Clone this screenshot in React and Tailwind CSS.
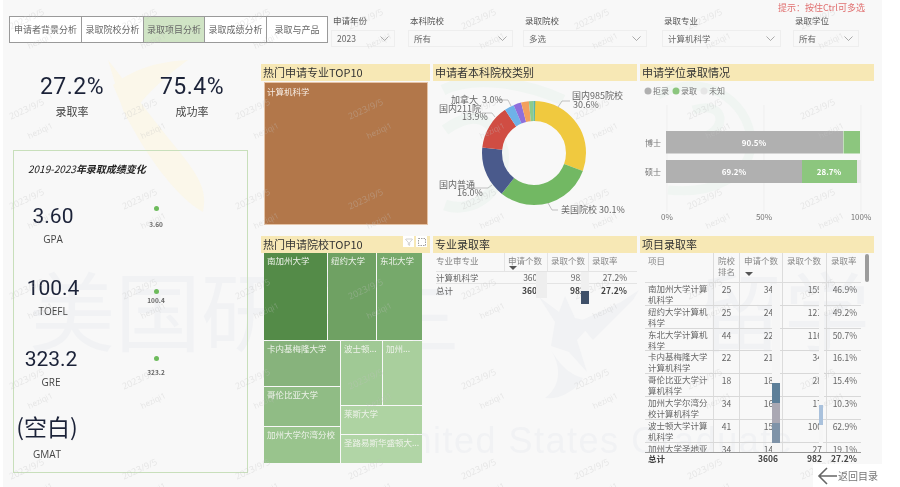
import { Filter } from "lucide-react";

const cjk = "font-['Noto_Sans_CJK_SC','Liberation_Sans',sans-serif]";

const tabs = [
  { label: "申请者背景分析", width: "w-[73px]" },
  { label: "录取院校分析", width: "w-[63px]" },
  { label: "录取项目分析", width: "w-[62px]", active: true },
  { label: "录取成绩分析", width: "w-[63px]" },
  { label: "录取与产品", width: "w-[62px]" },
];

const slicers = [
  { label: "申请年份", value: "2023", width: "w-[64px]", gap: "ml-[4px]" },
  { label: "本科院校", value: "所有", width: "w-[105px]", gap: "ml-[13px]" },
  { label: "录取院校", value: "多选", width: "w-[124px]", gap: "ml-[10px]" },
  { label: "录取专业", value: "计算机科学", width: "w-[119px]", gap: "ml-[15px]" },
  { label: "录取学位", value: "所有", width: "w-[66px]", gap: "ml-[12px]" },
];

const scores = [
  { value: "3.60", name: "GPA", box: "w-[76px]", dot: "pt-[7px]", gap: "mt-[10px]" },
  { value: "100.4", name: "TOEFL", box: "w-[76px]", dot: "pt-[18px]", gap: "mt-[3px]" },
  { value: "323.2", name: "GRE", box: "w-[72px]", dot: "pt-[14px]", gap: "mt-[8px]" },
];

const donut = [
  { size: 30.6, color: "#f0c93f" },
  { size: 30.1, color: "#72b863" },
  { size: 16, color: "#4a5a8c" },
  { size: 13.9, color: "#d04d43" },
  { size: 3, color: "#6eb2e8" },
  { size: 2.4, color: "#8e6fdc" },
  { size: 2.4, color: "#f2a05e" },
  { size: 1.4, color: "#8ccb8c" },
  { size: 0.6, color: "#5ab5a8" },
];

const projects = [
  ["南加州大学计算机科学", "25", "340", "159", "46.9%"],
  ["纽约大学计算机科学", "25", "246", "121", "49.2%"],
  ["东北大学计算机科学", "44", "229", "116", "50.7%"],
  ["卡内基梅隆大学计算机科学", "22", "211", "34", "16.1%"],
  ["哥伦比亚大学计算机科学", "18", "182", "28", "15.4%"],
  ["加州大学尔湾分校计算机科学", "34", "165", "17", "10.3%"],
  ["波士顿大学计算机科学", "41", "159", "100", "62.9%"],
  ["加州大学圣地亚哥计算机科学", "34", "141", "27", "19.1%"],
];

const marks = [];
for (let y = 0; y < 6; y++) {
  for (let x = 0; x < 8; x++) {
    marks.push({ x: 4 + x * 113, y: 12 + y * 90 });
  }
}

function Title({ children, right }) {
  return (
    <div className="h-[17px] shrink-0 bg-[#f7e8b5] pl-[2px] flex items-center justify-between text-[11px] leading-none text-[#333]">
      <span>{children}</span>
      {right}
    </div>
  );
}

function Cell({ label, className }) {
  return (
    <div className={`px-[3px] pt-[2px] text-[8.5px] leading-[11px] text-[#eef2ea] overflow-hidden whitespace-nowrap ${className}`}>
      {label}
    </div>
  );
}

function Watermarks() {
  return (
    <div className="absolute inset-0 pointer-events-none">
      {marks.map((m) => (
        <div key={`${m.x}-${m.y}`} className="absolute w-[50px] text-center -rotate-[25deg] text-[9px] leading-[12px] text-[#c4c4c4]/35 font-['Open_Sans',sans-serif]" style={{ left: m.x, top: m.y }}>
          <div>2023/9/5</div>
          <div className="mt-[13px] ml-[6px] text-[8px]">heziqi1</div>
        </div>
      ))}
    </div>
  );
}

function Backdrop() {
  return (
    <div className="absolute inset-0 overflow-hidden">
      <svg className="absolute left-0 top-0 w-[900px] h-[487px]" viewBox="0 0 900 487" fill="none">
        <path d="M105 60 C125 85 150 120 175 150 C195 175 205 190 200 212 C170 195 140 150 120 110 Z" fill="#fbf7ea" />
        <path d="M185 60 C165 75 145 90 125 120 L110 85 C130 70 150 62 185 60 Z" fill="#fbf7ea" />
        <path d="M440 90 C470 75 520 82 560 100 M442 130 C470 110 490 115 500 150 C505 190 470 215 442 205" stroke="#f0f5f2" strokeWidth="11" />
        <path d="M655 95 C700 70 745 100 748 140 C750 175 710 195 665 190 M690 110 C720 100 725 125 705 135" stroke="#f0f5f2" strokeWidth="9" />
        {/* statue */}
        <path d="M536 297 L556 312 L562 296 L572 318 L590 322 L574 340 L584 372 L566 352 L548 346 L552 322 Z" fill="#f1f2f4" />
        <path d="M575 322 L618 302 L636 290 L630 300 L590 340 Z" fill="#f1f2f4" />
        <path d="M548 350 C560 370 570 375 580 378 C572 392 555 400 542 398 C556 388 560 370 548 350 Z" fill="#f1f2f4" />
      </svg>
      <div className={`absolute left-[26px] top-[258px] whitespace-nowrap text-[86px] leading-[100px] text-[#f1f2f4] ${cjk}`}>美国研究生</div>
      <div className={`absolute left-[695px] top-[258px] whitespace-nowrap text-[86px] leading-[100px] text-[#f1f2f4] ${cjk}`}>留学</div>
      <div className="absolute left-[381px] top-[419px] whitespace-nowrap text-[36px] leading-[44px] tracking-[1.5px] text-[#f1f2f4] font-['Liberation_Sans',sans-serif]">United States Graduate</div>
    </div>
  );
}

function DonutChart() {
  let used = 0;
  return (
    <svg className="w-[204px] h-[151px]" viewBox="433 81 204 151" fontSize="9" fill="#666">
      <g transform="rotate(-90 534 153)" fill="none">
        {donut.map((d) => {
          const circle = (
            <circle key={d.color} cx="534" cy="153" r="42" stroke={d.color} strokeWidth="20" pathLength="100" strokeDasharray={`${d.size} ${100 - d.size}`} strokeDashoffset={-used} />
          );
          used += d.size;
          return circle;
        })}
      </g>
      <g stroke="#aaa" strokeWidth="0.7" fill="none">
        <path d="M558 107 L562 101 L570 101" />
        <path d="M498 100 L508 100 L511 106" />
        <path d="M482 113 L492 113 L495 117" />
        <path d="M470 188 L488 188 L492 185" />
        <path d="M548 203 L552 210 L558 210" />
      </g>
      <text x="572" y="99">国内985院校</text>
      <text x="573" y="108">30.6%</text>
      <text x="451" y="103">加拿大</text>
      <text x="482" y="103">3.0%</text>
      <text x="439" y="112">国内211院</text>
      <text x="462" y="120">13.9%</text>
      <text x="439" y="188">国内普通</text>
      <text x="457" y="196">16.0%</text>
      <text x="561" y="213">美国院校 30.1%</text>
    </svg>
  );
}

function BarChart() {
  return (
    <svg className="w-[234px] h-[151px]" viewBox="640 81 234 151" fontSize="8" fill="#777">
      <circle cx="648" cy="91" r="3.5" fill="#b0b0b0" />
      <text x="653" y="94">拒录</text>
      <circle cx="676" cy="91" r="3.5" fill="#8cc67e" />
      <text x="681" y="94">录取</text>
      <circle cx="704" cy="91" r="3.5" fill="#e6e6e6" />
      <text x="709" y="94">未知</text>
      <path d="M667 105 V212 M764 105 V212 M861 105 V212" stroke="#ececec" strokeWidth="0.7" />
      <rect x="666" y="131" width="177" height="22.5" fill="#b0b0b0" />
      <rect x="843.5" y="131" width="16.5" height="22.5" fill="#8cc67e" />
      <rect x="666" y="160" width="136" height="23" fill="#b0b0b0" />
      <rect x="802" y="160" width="55" height="23" fill="#8cc67e" />
      <rect x="857" y="160" width="4" height="23" fill="#e9e9e9" />
      <text x="645" y="146">博士</text>
      <text x="645" y="175">硕士</text>
      <g fontWeight="700" fill="#fff" textAnchor="middle">
        <text x="754" y="146">90.5%</text>
        <text x="734" y="175">69.2%</text>
        <text x="829" y="175">28.7%</text>
      </g>
      <text x="667" y="220" textAnchor="middle">0%</text>
      <text x="764" y="220" textAnchor="middle">50%</text>
      <text x="861" y="220" textAnchor="middle">100%</text>
    </svg>
  );
}

function Treemap() {
  return (
    <div className="ml-[3px] w-[158px] h-[210px] flex flex-col gap-[1px]">
      <div className="h-[87px] flex gap-[1px]">
        <Cell label="南加州大学" className="w-[63px] bg-[#548b48]" />
        <Cell label="纽约大学" className="w-[48px] bg-[#6fa163]" />
        <Cell label="东北大学" className="flex-1 bg-[#76a96b]" />
      </div>
      <div className="flex-1 flex gap-[1px]">
        <div className="w-[78px] flex flex-col gap-[1px]">
          <Cell label="卡内基梅隆大学" className="h-[45px] bg-[#87b37c]" />
          <Cell label="哥伦比亚大学" className="h-[39px] bg-[#90bc85]" />
          <Cell label="加州大学尔湾分校" className="flex-1 bg-[#99c48d]" />
        </div>
        <div className="flex-1 flex flex-col gap-[1px]">
          <div className="h-[64px] flex gap-[1px]">
            <Cell label="波士顿..." className="w-[41px] bg-[#a0c995]" />
            <Cell label="加州..." className="flex-1 bg-[#a9cf9d]" />
          </div>
          <Cell label="莱斯大学" className="h-[28px] bg-[#aed3a2]" />
          <Cell label="圣路易斯华盛顿大..." className="flex-1 bg-[#b1d5a6]" />
        </div>
      </div>
    </div>
  );
}

function MajorTable() {
  const row = "grid grid-cols-[68px_43px_41px_42px] h-[12px] items-center text-[8.5px] leading-none";
  return (
    <div className="ml-[3px] text-[#666]">
      <div className="grid grid-cols-[68px_43px_41px_42px] h-[19px] text-[8.5px] leading-[11px] text-[#888] border-b border-[#e4e4e4]">
        <div className="pt-[2px]">专业审专业</div>
        <div className="pl-[3px] pt-[2px] border-l border-[#e4e4e4]">
          <div>申请个数</div>
          <div className="ml-[1px] w-0 h-0 border-x-[4px] border-t-[4px] border-x-transparent border-t-[#555]" />
        </div>
        <div className="pl-[3px] pt-[2px] border-l border-[#e4e4e4]">录取个数</div>
        <div className="pl-[3px] pt-[2px] border-l border-[#e4e4e4]">录取率</div>
      </div>
      <div className={`${row} border-b border-[#e4e4e4]`}>
        <div>计算机科学</div>
        <div className="text-right pr-[5px]">3606</div>
        <div className="text-right pr-[3px]">982</div>
        <div className="text-right pr-[3px]">27.2%</div>
      </div>
      <div className={row}>
        <div>总计</div>
        <div className="text-right pr-[5px] font-bold text-[#444]">3606</div>
        <div className="text-right pr-[3px] font-bold text-[#444]">982</div>
        <div className="text-right pr-[3px] font-bold text-[#444]">27.2%</div>
      </div>
    </div>
  );
}

function ProjectTable() {
  const cols = "grid grid-cols-[68px_26px_43px_44px_35px]";
  return (
    <div className="ml-[5px] mr-[3px] flex gap-[4px] h-[210px]">
      <div className="w-[216px] text-[#666]">
        <div className={`${cols} h-[30px] text-[8.5px] leading-[11px] text-[#888] border-b border-[#dcdcdc]`}>
          <div className="pl-[3px] pt-[2px]">项目</div>
          <div className="pl-[4px] pt-[2px] border-l border-[#dcdcdc]">院校排名</div>
          <div className="pl-[4px] pt-[2px] border-l border-[#dcdcdc]">
            <div>申请个数</div>
            <div className="mt-[6px] ml-[1px] w-0 h-0 border-x-[4px] border-t-[4px] border-x-transparent border-t-[#555]" />
          </div>
          <div className="pl-[4px] pt-[2px] border-l border-[#dcdcdc]">录取个数</div>
          <div className="pl-[4px] pt-[2px] border-l border-[#dcdcdc]">录取率</div>
        </div>
        <div className="h-[169px] overflow-hidden">
          {projects.map((p) => (
            <div key={p[0]} className={`${cols} h-[22.8px] border-b border-[#d8d8d8] text-[8.5px] leading-[11px]`}>
              <div className="pl-[3px] pr-[2px] overflow-hidden">{p[0]}</div>
              <div className="text-center border-l border-[#dcdcdc] pt-[1px]">{p[1]}</div>
              <div className="text-right border-l border-[#dcdcdc] pt-[1px] pr-[4px]">{p[2]}</div>
              <div className="text-right border-l border-[#dcdcdc] pt-[1px] pr-[4px]">{p[3]}</div>
              <div className="text-right border-l border-[#dcdcdc] pt-[1px] pr-[4px]">{p[4]}</div>
            </div>
          ))}
        </div>
        <div className={`${cols} h-[11px] items-center text-[8.5px] leading-none font-bold text-[#444] border-t border-[#999]`}>
          <div className="pl-[3px]">总计</div>
          <div />
          <div className="text-right pr-[4px]">3606</div>
          <div className="text-right pr-[4px]">982</div>
          <div className="text-right pr-[4px]">27.2%</div>
        </div>
      </div>
      <div className="w-[4px] h-[28px] mt-[1px] rounded-full bg-[#9c9c9c]" />
    </div>
  );
}

export default function App() {
  return (
    <div className={`relative w-[900px] h-[487px] overflow-hidden bg-white blur-[0.35px] ${cjk}`}>
      <div className="relative ml-[3px] w-[879px] h-full bg-[#f8f8f8]">
        <Backdrop />

        <div className="relative">
          {/* Header */}
          <div className="h-[64px] flex pl-[6px]">
            <div className="flex mt-[16px] h-[27px]">
              {tabs.map((t) => (
                <div key={t.label} className={`${t.width} flex items-center justify-center border border-[#9a9a9a] -mr-px text-[9px] leading-none text-[#666] ${t.active ? "bg-[#d0e4c5]" : "bg-white"}`}>
                  {t.label}
                </div>
              ))}
            </div>
            {slicers.map((s) => (
              <div key={s.label} className={`${s.width} ${s.gap} mt-[15px]`}>
                <div className="h-[15px] pl-[2px] text-[8.5px] leading-[11px] text-[#555]">{s.label}</div>
                <div className="h-[17px] px-[5px] flex items-center justify-between border border-[#eeeeee] text-[8.5px] text-[#666]">
                  <span>{s.value}</span>
                  <svg width="9" height="5" viewBox="0 0 9 5" fill="none" stroke="#888" strokeWidth="0.7"><path d="M0.5 0.5 L4.5 4.5 L8.5 0.5" /></svg>
                </div>
              </div>
            ))}
          </div>

          <div className="flex">
            {/* Left column */}
            <div className="w-[258px] shrink-0 pl-[10px]">
              <div className="flex w-[240px] h-[86px]">
                <div className="w-[118px] text-center">
                  <div className="mt-[8px] text-[23px] leading-[30px] text-[#1b2238] font-['Roboto',sans-serif] tracking-[0.5px]">27.2%</div>
                  <div className="mt-[2px] text-[11px] leading-[14px] text-[#444]">录取率</div>
                </div>
                <div className="w-[122px] text-center">
                  <div className="mt-[8px] text-[23px] leading-[30px] text-[#1b2238] font-['Roboto',sans-serif] tracking-[0.5px]">75.4%</div>
                  <div className="mt-[2px] text-[11px] leading-[14px] text-[#444]">成功率</div>
                </div>
              </div>
              <div className="w-[235px] h-[323px] border-[1.5px] border-[#c8dfbb]">
                <div className="pl-[14px] pt-[11px] h-[36px] text-[10px] leading-[13px] text-[#222] italic">
                  2019-2023<span className="font-bold">年录取成绩变化</span>
                </div>
                {scores.map((s) => (
                  <div key={s.name} className="h-[71.5px] flex">
                    <div className={`${s.box} ml-[1px] text-center shrink-0`}>
                      <div className="pt-[15px] text-[21px] leading-[28px] text-[#1b2238] font-['Roboto',sans-serif]">{s.value}</div>
                      <div className="mt-[3px] text-[10px] leading-[13px] text-[#444] font-['Open_Sans',sans-serif]">{s.name}</div>
                    </div>
                    <div className={`w-[20px] ${s.box === "w-[72px]" ? "ml-[59px]" : "ml-[55px]"} flex flex-col items-center mt-[12px] ${s.dot}`}>
                      <div className="w-[5px] h-[5px] rounded-full bg-[#6dbb5c]" />
                      <div className={`${s.gap} text-[6.5px] leading-none font-bold text-[#666]`}>{s.value}</div>
                    </div>
                  </div>
                ))}
                <div className="ml-[1px] w-[64px] text-center">
                  <div className="pt-[8px] text-[23px] leading-[32px] text-[#1b2238] whitespace-nowrap">(空白)</div>
                  <div className="mt-[6px] text-[10px] leading-[13px] text-[#444] font-['Open_Sans',sans-serif]">GMAT</div>
                </div>
              </div>
            </div>

            {/* Panels */}
            <div className="grid grid-cols-[169px_204px_234px] grid-rows-[172px_227px] gap-x-[3px]">
              <div>
                <Title>热门申请专业TOP10</Title>
                <div className="mt-[1px] ml-[3px] w-[164px] h-[143px] bg-[#b2774a] border border-[#e5c4a7] px-[2px] pt-[3px] text-[8.5px] leading-[11px] text-[#f6ece3]">计算机科学</div>
              </div>
              <div>
                <Title>申请者本科院校类别</Title>
                <DonutChart />
              </div>
              <div>
                <Title>申请学位录取情况</Title>
                <BarChart />
              </div>
              <div>
                <Title
                  right={
                    <div className="flex gap-[2px] pr-[3px] self-start">
                      <div className="w-[11px] h-[11px] bg-white flex items-center justify-center">
                        <Filter size={8} strokeWidth={1} color="#777" />
                      </div>
                      <div className="w-[11px] h-[11px] bg-white flex items-center justify-center">
                        <svg width="8" height="8" viewBox="0 0 8 8" fill="none" stroke="#777" strokeWidth="0.7" strokeDasharray="1.5 1"><rect x="0.5" y="0.5" width="7" height="7" /></svg>
                      </div>
                    </div>
                  }
                >
                  热门申请院校TOP10
                </Title>
                <Treemap />
              </div>
              <div>
                <Title>专业录取率</Title>
                <MajorTable />
              </div>
              <div>
                <Title>项目录取率</Title>
                <ProjectTable />
              </div>
            </div>
          </div>
        </div>

        <Watermarks />
      </div>

      {/* Hint above the slicers */}
      <div className="absolute left-[778px] top-[2px] text-[9px] leading-[12px] text-[#e07070] whitespace-nowrap">提示：按住Ctrl可多选</div>

      {/* Stray blocks lying over the tables */}
      <div className="absolute left-[536px] top-[272px] w-[11px] h-[26px] bg-[#eeeeee]" />
      <div className="absolute left-[581px] top-[272px] w-[8px] h-[19px] bg-[#f0f0f0]" />
      <div className="absolute left-[581px] top-[291px] w-[8px] h-[13px] bg-[#3f5069]" />
      <div className="absolute left-[772px] top-[284px] w-[8px] h-[99px] bg-[#f6f6f6]" />
      <div className="absolute left-[772px] top-[383px] w-[8px] h-[20px] bg-[#5d7f99]" />
      <div className="absolute left-[772px] top-[403px] w-[8px] h-[20px] bg-[#aaa8b3]" />
      <div className="absolute left-[772px] top-[423px] w-[8px] h-[20px] bg-[#7f93a8]" />
      <div className="absolute left-[772px] top-[443px] w-[8px] h-[9px] bg-[#f6f6f6]" />
      <div className="absolute left-[819px] top-[284px] w-[5px] h-[121px] bg-[#f6f6f6]" />
      <div className="absolute left-[819px] top-[405px] w-[4px] h-[20px] bg-[#a9c1dc]" />
      <div className="absolute left-[819px] top-[425px] w-[4px] h-[18px] bg-[#f6f6f6]" />

      {/* Back link */}
      <div className="absolute left-[813px] top-[464px] w-[69px] h-[23px] bg-white flex items-center pl-[4px] gap-[1px] text-[10px] text-[#777]">
        <svg width="20" height="18" viewBox="0 0 20 18" fill="none" stroke="#666" strokeWidth="1.6"><path d="M20 9 H2 M10 1 L2 9 L10 17" /></svg>
        <span>返回目录</span>
      </div>
    </div>
  );
}
